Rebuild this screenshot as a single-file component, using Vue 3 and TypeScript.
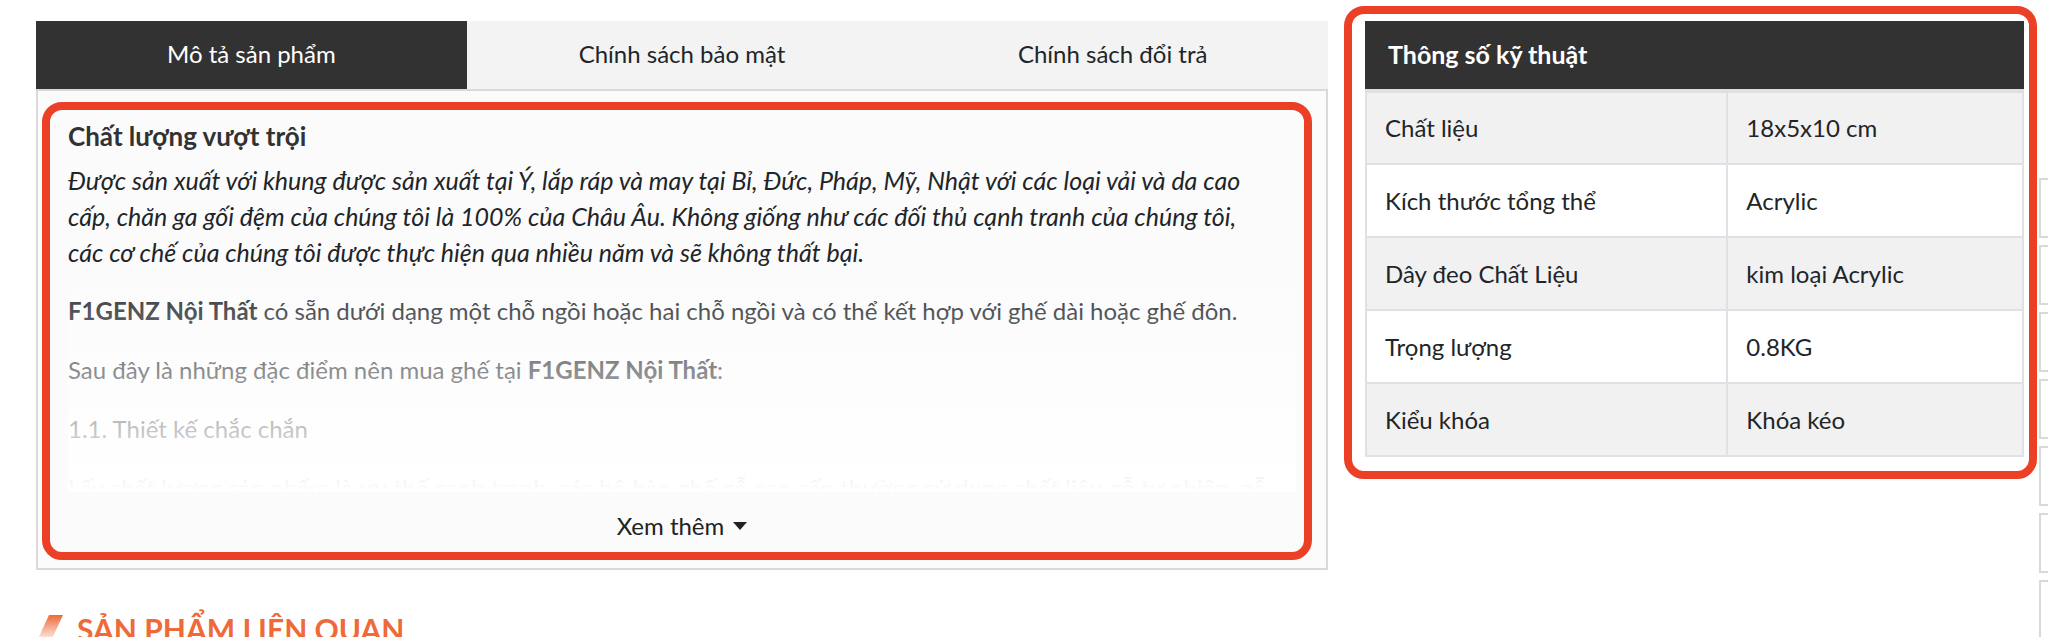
<script setup lang="ts">
import { ref } from 'vue'

interface Spec {
  name: string
  value: string
}

const tabs: string[] = ['Mô tả sản phẩm', 'Chính sách bảo mật', 'Chính sách đổi trả']
const activeTab = ref(0)
const expanded = ref(false)

const introLines: string[] = [
  'Được sản xuất với khung được sản xuất tại Ý, lắp ráp và may tại Bỉ, Đức, Pháp, Mỹ, Nhật với các loại vải và da cao',
  'cấp, chăn ga gối đệm của chúng tôi là 100% của Châu Âu. Không giống như các đối thủ cạnh tranh của chúng tôi,',
  'các cơ chế của chúng tôi được thực hiện qua nhiều năm và sẽ không thất bại.',
]

const specs: Spec[] = [
  { name: 'Chất liệu', value: '18x5x10 cm' },
  { name: 'Kích thước tổng thể', value: 'Acrylic' },
  { name: 'Dây đeo Chất Liệu', value: 'kim loại Acrylic' },
  { name: 'Trọng lượng', value: '0.8KG' },
  { name: 'Kiểu khóa', value: 'Khóa kéo' },
]

const railItems = 7
</script>

<template>
  <main class="page">
    <div class="columns">
      <section class="description">
        <div class="tabs" role="tablist">
          <button
            v-for="(tab, i) in tabs"
            :key="tab"
            type="button"
            role="tab"
            class="tab"
            :class="{ active: i === activeTab }"
            :aria-selected="i === activeTab"
            @click="activeTab = i"
          >
            {{ tab }}
          </button>
        </div>
        <div class="panel" role="tabpanel">
          <div class="highlight panel-highlight"></div>
          <div class="content" :class="{ expanded }">
            <h3>Chất lượng vượt trội</h3>
            <p class="intro">
              <span v-for="line in introLines" :key="line">{{ line }}</span>
            </p>
            <p>
              <strong>F1GENZ Nội Thất</strong> có sẵn dưới dạng một chỗ ngồi hoặc hai chỗ ngồi và có thể kết hợp với ghế
              dài hoặc ghế đôn.
            </p>
            <p>Sau đây là những đặc điểm nên mua ghế tại <strong>F1GENZ Nội Thất</strong>:</p>
            <p>1.1. Thiết kế chắc chắn</p>
            <p>
              Lấy chất lượng sản phẩm là ưu thế cạnh tranh, các bộ bàn ghế gỗ cao cấp thường sử dụng chất liệu gỗ tự
              nhiên, gỗ
            </p>
          </div>
          <button type="button" class="more" @click="expanded = !expanded">
            Xem thêm
            <svg class="caret" viewBox="0 0 14 8" aria-hidden="true"><path d="M0 0h14L7 8z" /></svg>
          </button>
        </div>
      </section>

      <section class="specs">
        <div class="highlight specs-highlight"></div>
        <h2>Thông số kỹ thuật</h2>
        <table>
          <tbody>
            <tr v-for="spec in specs" :key="spec.name">
              <th scope="row">{{ spec.name }}</th>
              <td>{{ spec.value }}</td>
            </tr>
          </tbody>
        </table>
      </section>
    </div>

    <h2 class="related">
      <svg class="slash" viewBox="0 0 24 28" aria-hidden="true">
        <defs>
          <linearGradient id="slash-fade" x1="0" y1="0" x2="0" y2="1">
            <stop offset="0" stop-color="#ee6a38" />
            <stop offset="1" stop-color="#ee6a38" stop-opacity="0" />
          </linearGradient>
        </defs>
        <path d="M10 0h14L11 28H-3z" fill="url(#slash-fade)" />
      </svg>
      SẢN PHẨM LIÊN QUAN
    </h2>

    <aside class="rail">
      <div v-for="n in railItems" :key="n" class="rail-item"></div>
    </aside>
  </main>
</template>

<style>
body {
  margin: 0;
  background: #fff;
}
</style>

<style scoped>
.page {
  position: relative;
  box-sizing: border-box;
  height: 100vh;
  padding: 21px 24px 0 36px;
  overflow: hidden;
  color: #212529;
  font: 24px/36px Lato, 'Noto Sans', sans-serif;
}

.page * {
  box-sizing: border-box;
}

.columns {
  display: grid;
  grid-template-columns: 1292fr 659fr;
  gap: 37px;
  align-items: start;
}

.tabs {
  display: grid;
  grid-template-columns: repeat(3, 1fr);
}

.tab {
  height: 68px;
  padding: 0 0 2px;
  border: 0;
  background: #f3f3f3;
  color: inherit;
  font: inherit;
  cursor: pointer;
}

.tab.active {
  background: #323232;
  color: #fff;
}

.panel {
  position: relative;
  padding: 27px 30px 24px;
  border: 2px solid #d9d9d9;
  background: #fbfbfb;
}

.highlight {
  position: absolute;
  border: 8px solid #ec4026;
  border-radius: 20px;
  pointer-events: none;
}

.panel-highlight {
  inset: 11px 14px 8px 4px;
}

.specs-highlight {
  inset: -15px -13px -22px -21px;
}

.content {
  position: relative;
  height: 374px;
  overflow: hidden;
}

.content.expanded {
  height: auto;
}

.content:not(.expanded)::after {
  content: '';
  position: absolute;
  inset: auto 0 0;
  height: 230px;
  background: linear-gradient(rgba(255, 255, 255, 0), #fff);
}

.content h3 {
  margin: 0 0 8px;
  color: #323232;
  font-size: 26px;
  line-height: 36px;
  font-weight: 700;
}

.content p {
  margin: 0 0 23px;
  white-space: nowrap;
}

.content .intro {
  font-size: 25px;
  font-style: italic;
}

.intro span {
  display: block;
}

.more {
  display: flex;
  align-items: center;
  gap: 9px;
  margin: 16px auto 0;
  padding: 0;
  border: 0;
  background: none;
  color: #222;
  font: inherit;
  cursor: pointer;
}

.caret {
  width: 14px;
  height: 8px;
  fill: #222;
}

.specs {
  position: relative;
}

.specs h2 {
  margin: 0;
  padding: 15px 23px 17px;
  background: #323232;
  color: #fff;
  font-size: 25px;
  line-height: 36px;
  font-weight: 700;
}

.specs table {
  width: 100%;
  border-collapse: collapse;
  border-top: 4px solid #dee0e4;
  table-layout: fixed;
}

.specs th,
.specs td {
  height: 73px;
  padding: 0 18px;
  border: 2px solid #dee2e6;
  font-weight: 400;
  text-align: left;
}

.specs th {
  width: 55%;
}

.specs tr:first-child th,
.specs tr:first-child td {
  border-top: 0;
}

.specs tr:nth-child(odd) {
  background: #f1f1f1;
}

.related {
  display: flex;
  align-items: center;
  gap: 14px;
  margin: 37px 0 0 3px;
  color: #ee6a38;
  font-size: 30px;
  line-height: 44px;
  font-weight: 700;
}

.slash {
  width: 24px;
  height: 28px;
}

.rail {
  position: absolute;
  top: 178px;
  left: calc(100% - 9px);
  display: grid;
  gap: 7px;
  width: 60px;
}

.rail-item {
  height: 60px;
  border: 2px solid #d9d9d9;
}
</style>
